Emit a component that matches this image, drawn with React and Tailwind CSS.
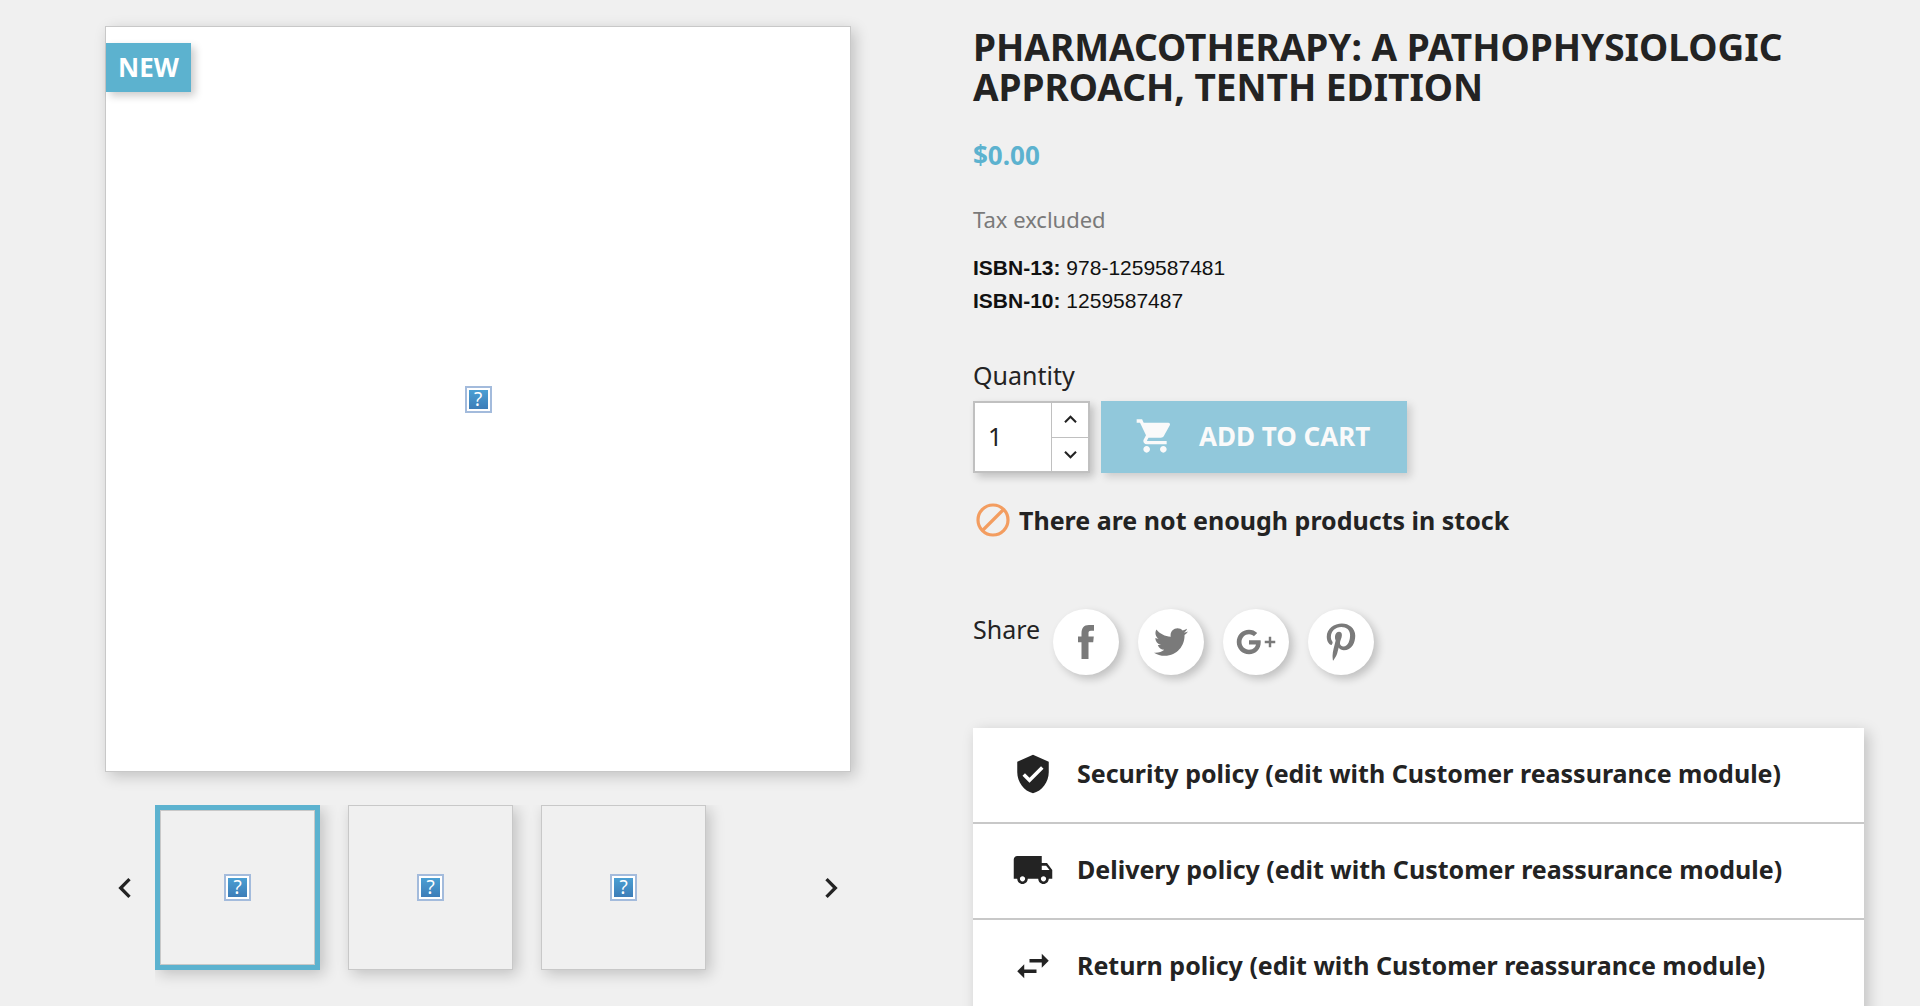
import { useState } from "react";
import {
  MdChevronLeft,
  MdChevronRight,
  MdKeyboardArrowDown,
  MdKeyboardArrowUp,
  MdLocalShipping,
  MdShoppingCart,
  MdSwapHoriz,
  MdVerifiedUser,
} from "react-icons/md";
import { FaPinterestP, FaTwitter } from "react-icons/fa";

const policies = [
  { Icon: MdVerifiedUser, text: "Security policy (edit with Customer reassurance module)" },
  { Icon: MdLocalShipping, text: "Delivery policy (edit with Customer reassurance module)" },
  { Icon: MdSwapHoriz, text: "Return policy (edit with Customer reassurance module)" },
];

const networks = [
  { name: "Facebook", Icon: FacebookIcon, size: "h-[34px] w-4" },
  { name: "Twitter", Icon: FaTwitter, size: "size-[34px]" },
  { name: "Google+", Icon: GooglePlusIcon, size: "size-[42px]" },
  { name: "Pinterest", Icon: FaPinterestP, size: "h-[38px] w-[30px]" },
];

function FacebookIcon({ className }) {
  return (
    <svg viewBox="0 0 16 34" fill="currentColor" className={className}>
      <path d="M3.5 34V17.3H0v-5.7h3.5V8.2C3.5 3.4 5.6 0 11 0h5v5.7h-3c-2.2 0-2.5.9-2.5 2.6v3.3h5.3l-.6 5.7h-4.7V34z" />
    </svg>
  );
}

function GooglePlusIcon({ className }) {
  return (
    <svg viewBox="0 0 24 24" fill="currentColor" className={className}>
      <path d="M23 11.300h-2.300V9h-1.400v2.300H17v1.400h2.300V15h1.400v-2.300H23zM8 11v2.400h4c-.2 1-1.2 3-4 3-2.4 0-4.3-2-4.3-4.400S5.600 7.600 8 7.600c1.400 0 2.300.6 2.800 1.100l1.900-1.800C11.500 5.700 9.900 5 8 5c-3.900 0-7 3.100-7 7s3.100 7 7 7c4 0 6.700-2.800 6.700-6.800 0-.5 0-.8-.1-1.200z" />
    </svg>
  );
}

function UnavailableIcon() {
  return (
    <svg viewBox="0 0 34 34" fill="none" stroke="#f39d60" strokeWidth="3.2" className="size-[34px]">
      <circle cx="17" cy="17" r="15" />
      <path d="M6.5 27.5l21-21" />
    </svg>
  );
}

function MissingImage() {
  return (
    <span className="block size-[27px] border-2 border-[#a3bbdc] bg-white p-0.5">
      <span className="flex size-[19px] items-center justify-center bg-linear-to-b from-[#4a9fd3] to-[#3d7db8] text-[19px] leading-none text-white">
        ?
      </span>
    </span>
  );
}

function Gallery() {
  const [selected, setSelected] = useState(0);

  return (
    <section>
      <div className="relative flex aspect-square items-center justify-center border border-[#c8c8c8] bg-white shadow-[4px_4px_14px_rgba(0,0,0,0.2)]">
        <MissingImage />
        <span className="absolute top-4 left-0 bg-[#5cb2cf] px-3 py-2 text-[26px] leading-[33px] font-bold text-white shadow-[4px_4px_8px_rgba(0,0,0,0.2)]">
          NEW
        </span>
      </div>
      <div className="mt-[33px] flex items-start">
        <button aria-label="Previous" className="flex h-[165px] w-[50px] items-center">
          <MdChevronLeft className="size-10" />
        </button>
        <ul className="flex flex-1 gap-7 overflow-hidden pb-5">
          {[0, 1, 2].map((i) => (
            <li key={i}>
              <button
                aria-label={`Image ${i + 1}`}
                onClick={() => setSelected(i)}
                className={
                  "size-[165px] shadow-[4px_4px_14px_rgba(0,0,0,0.2)] " +
                  (i === selected ? "border-[5px] border-[#5cb2cf]" : "")
                }
              >
                <span className="flex size-full items-center justify-center border border-[#c8c8c8]">
                  <MissingImage />
                </span>
              </button>
            </li>
          ))}
        </ul>
        <button aria-label="Next" className="flex h-[165px] items-center">
          <MdChevronRight className="size-10" />
        </button>
      </div>
    </section>
  );
}

function AddToCart() {
  const [quantity, setQuantity] = useState(1);

  return (
    <div className="mt-10">
      <label htmlFor="quantity" className="block text-[25px] leading-9">
        Quantity
      </label>
      <div className="mt-2 flex gap-[11px]">
        <div className="flex h-[72px] w-[117px] border-2 border-[#c0c0c0] bg-white shadow-[4px_4px_8px_rgba(0,0,0,0.2)]">
          <input
            id="quantity"
            type="text"
            value={quantity}
            onChange={(e) => setQuantity(Number(e.target.value) || 0)}
            className="min-w-0 flex-1 pl-[13px] text-[25px] outline-none"
          />
          <div className="flex w-[37px] flex-col divide-y divide-[#c0c0c0] border-l border-[#c0c0c0]">
            <button
              aria-label="Increase"
              onClick={() => setQuantity(quantity + 1)}
              className="flex flex-1 items-center justify-center"
            >
              <MdKeyboardArrowUp className="size-[25px]" />
            </button>
            <button
              aria-label="Decrease"
              onClick={() => setQuantity(Math.max(1, quantity - 1))}
              className="flex flex-1 items-center justify-center"
            >
              <MdKeyboardArrowDown className="size-[25px]" />
            </button>
          </div>
        </div>
        <button
          disabled
          className="flex h-[72px] items-center gap-6 bg-[#91c8db] pr-[37px] pb-0.5 pl-[34px] text-[26px] font-bold text-[#fafafa] uppercase shadow-[4px_4px_8px_rgba(0,0,0,0.15)]"
        >
          <MdShoppingCart className="size-10" />
          Add to cart
        </button>
      </div>
      <p className="mt-7 flex items-center gap-[9px] pl-[3px] text-[25px] leading-[38px] font-bold">
        <UnavailableIcon />
        There are not enough products in stock
      </p>
    </div>
  );
}

function Share() {
  return (
    <div className="mt-[70px] flex items-start">
      <span className="w-20 text-[25px] leading-10">Share</span>
      <ul className="flex gap-[19px]">
        {networks.map(({ name, Icon, size }) => (
          <li key={name}>
            <a
              href="#"
              aria-label={name}
              className="flex size-[66px] items-center justify-center rounded-full bg-white text-[#7a7a7a] shadow-[4px_4px_8px_rgba(0,0,0,0.2)]"
            >
              <Icon className={size} />
            </a>
          </li>
        ))}
      </ul>
    </div>
  );
}

function Reassurance() {
  return (
    <ul className="mt-[53px] bg-white shadow-[4px_4px_14px_rgba(0,0,0,0.2)]">
      {policies.map(({ Icon, text }) => (
        <li
          key={text}
          className="flex h-24 items-center gap-[23px] border-b-2 border-[#c8c8c8] pb-0.5 pl-[39px] text-[25px] font-bold"
        >
          <Icon className="size-[42px]" />
          {text}
        </li>
      ))}
    </ul>
  );
}

export default function App() {
  return (
    <main className="grid h-screen grid-cols-[746fr_891fr] gap-x-[122px] overflow-hidden bg-[#f0f0f0] pt-[26px] pr-14 pl-[105px] font-['Noto_Sans',sans-serif] text-[#232323]">
      <Gallery />
      <section className="pt-px">
        <h1 className="text-[37px] leading-10 font-bold uppercase">
          Pharmacotherapy: A Pathophysiologic Approach, Tenth Edition
        </h1>
        <p className="mt-[30px] text-[26px] leading-9 font-bold text-[#5cb2cf]">$0.00</p>
        <p className="mt-7 text-[22px] leading-9 text-[#7a7a7a]">Tax excluded</p>
        <div className="mt-3.5 font-['Liberation_Sans',sans-serif] text-[21px] leading-[33px] text-[#111]">
          <p>
            <b>ISBN-13:</b> 978-1259587481
          </p>
          <p>
            <b>ISBN-10:</b> 1259587487
          </p>
        </div>
        <AddToCart />
        <Share />
        <Reassurance />
      </section>
    </main>
  );
}
